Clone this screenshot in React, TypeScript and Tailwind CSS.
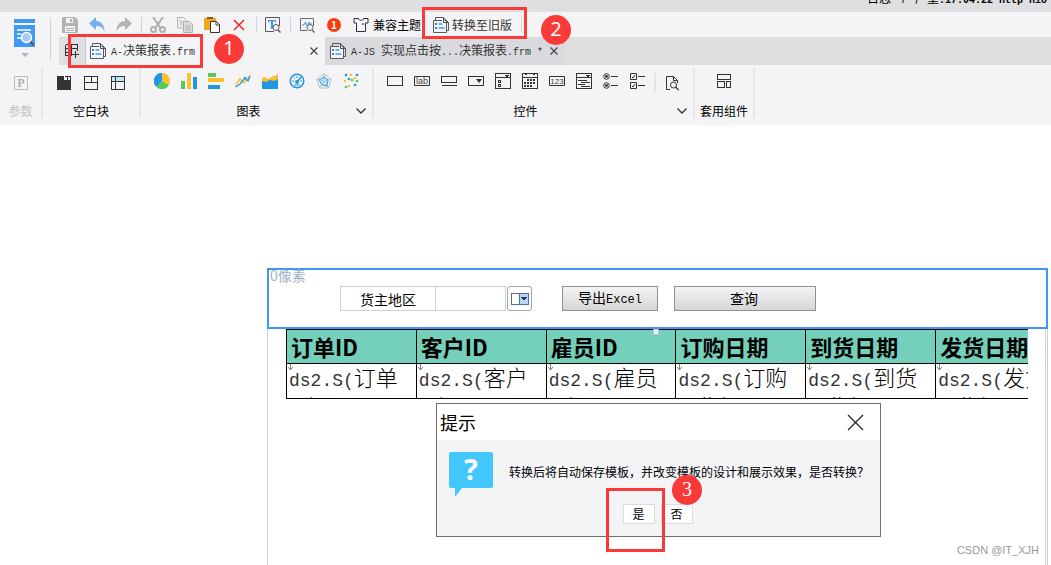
import React from 'react';

const INK = '#333335';

const Svg: React.FC<{ w?: number; h?: number; crisp?: boolean; children: React.ReactNode }> = ({ w = 16, h = 16, crisp, children }) => (
  <svg
    width={w}
    height={h}
    viewBox={`0 0 ${w} ${h}`}
    fill="none"
    shapeRendering={crisp ? 'crispEdges' : 'auto'}
    className="shrink-0"
    aria-hidden="true"
  >
    {children}
  </svg>
);

// Latin letters are set in a half-width mono face beside the CJK glyphs
const Mixed: React.FC<{ text: string; latin?: string }> = ({ text, latin = 'text-[10px]' }) => (
  <span className="whitespace-pre">
    {text.split(/([\x20-\x7e]+)/).map((part, i) =>
      i % 2 === 1 ? <span key={i} className={`font-['Liberation_Mono',monospace] ${latin}`}>{part}</span> : part
    )}
  </span>
);

/* ---------- toolbar icons ---------- */

const LogoIcon = () => (
  <Svg w={22} h={28}>
    <path d="M0 0h21v4H0zM0 6h21v22H0z" fill="#3f98f3" />
    <path d="M3 11h14M3 15h4M3 19h4" stroke="#fff" strokeWidth="1.5" />
    <path d="M15.5 22l4 4" stroke="#6b4a44" strokeWidth="2" />
    <circle cx="12.5" cy="18.5" r="5" fill="#a9cdf2" stroke="#fff" strokeWidth="1.5" />
  </Svg>
);

const SaveIcon = () => (
  <Svg>
    <path d="M1 0h12l3 3v13H0V1z" fill="#b3b3b5" />
    <path d="M4 1h7v5H4zM3 9h10v6H3z" fill="#f4f4f7" />
    <path d="M8 2h2v3H8zM4 11h8v1H4zM4 13h8v1H4z" fill="#b3b3b5" />
  </Svg>
);

const UndoIcon = () => (
  <Svg>
    <path d="M0 6.5L7 0v4c5 0 8.500 3.5 8.500 11C14 11 12 9 7 9v4z" fill="#78b0ee" />
  </Svg>
);

const RedoIcon = () => (
  <Svg>
    <path d="M16 6.5L9 0v4C4 4 .5 7.5.5 15 2 11 4 9 9 9v4z" fill="#b3b3b5" />
  </Svg>
);

const CutIcon = () => (
  <Svg>
    <path d="M3 0l7.5 11M13 0L5.5 11" stroke="#b0b0b2" strokeWidth="2" />
    <circle cx="3.5" cy="12.5" r="2.5" stroke="#b0b0b2" strokeWidth="2" />
    <circle cx="12.5" cy="12.5" r="2.5" stroke="#b0b0b2" strokeWidth="2" />
  </Svg>
);

const CopyIcon = () => (
  <Svg>
    <path d="M.5.5h6l3 3V11h-9z" fill="#f4f4f7" stroke="#b0b0b2" />
    <path d="M2.5 4h3M2.5 6h3M2.5 8h3" stroke="#b0b0b2" />
    <path d="M6.5 4.5h6l3 3v8h-9z" fill="#dcdcde" stroke="#b0b0b2" />
    <path d="M8.5 9h5M8.5 11h5M8.5 13h5" stroke="#b0b0b2" />
  </Svg>
);

const PasteIcon = () => (
  <Svg>
    <path d="M0 1h12v12H0z" fill="#f2a81d" />
    <path d="M3 0h6v2H3z" fill="#8a5a16" />
    <path d="M6.5 4.5h6l3 3v8h-9z" fill="#fff" stroke="#333" />
    <path d="M12 4.5v3.5h3.5" stroke="#333" />
  </Svg>
);

const DeleteIcon = () => (
  <Svg>
    <path d="M3 3l10 10M13 3L3 13" stroke="#ea2626" strokeWidth="1.5" />
  </Svg>
);

const TextSearchIcon = () => (
  <Svg>
    <path d="M9 14.5H.5V.5h14V9" stroke="#59595b" />
    <path d="M3 3h8v2.5h-.8L9.5 4H8v6.500l1 .5v.5H5V11l1-.5V4H4.500l-.7 1.500H3z" fill="#3f8ff0" />
    <circle cx="11" cy="10.5" r="3" fill="#f4f4f7" stroke="#59595b" />
    <path d="M13 13l2.5 2.5" stroke="#59595b" strokeWidth="1.5" />
  </Svg>
);

const ChartSearchIcon = () => (
  <Svg>
    <path d="M8 13.5H1.5v-12h13V9" stroke="#6a6a6c" />
    <path d="M3 8h2l1.5-3 2 5 1.5-5 1 2h2" stroke="#3f8ff0" />
    <circle cx="11" cy="10.5" r="3" fill="#f4f4f7" stroke="#6a6a6c" />
    <path d="M13 13l2.5 2.5" stroke="#6a6a6c" strokeWidth="1.5" />
  </Svg>
);

const ShirtIcon = () => (
  <Svg>
    <path d="M1 1.5h4.5C6 4 10 4 10.5 1.500H15V6h-2.500v8.500h-9V6H1z" stroke={INK} />
    <path d="M9 6h2v2H9z" fill="#3f98f3" />
  </Svg>
);

const TemplateIcon = () => (
  <Svg>
    <path d="M2.5 3V.5h8l5 5v8H14" stroke="#5a5a5c" />
    <path d="M.5 3.5h13v12H.5z" fill="#f4f4f7" stroke="#5a5a5c" />
    <path d="M9 2.5h1.5l3.5 3.5H9z" fill="#f4f4f7" />
    <path d="M10.5 1v4.5h5" stroke="#4a4a4c" />
    <path d="M2 6h2v2H2zM2 10h2v2H2z" fill="#2f86d8" />
    <path d="M5.5 7h4M5.5 11h6" stroke="#3f98f3" strokeWidth="1.5" />
  </Svg>
);

const AddTabIcon = () => (
  <Svg w={14} h={14} crisp>
    <path d="M.5.5h12v6M.5.5v11h6M.5 4.5h12M.5 8.5h6M6.5.5v11M10.5 7v7M7 10.5h7" stroke={INK} />
  </Svg>
);

const CloseIcon = () => (
  <Svg w={10} h={10}>
    <path d="M1.5 1.5l7 7M8.500 1.5l-7 7" stroke="#444" strokeWidth="1.2" />
  </Svg>
);

const ChevronIcon = () => (
  <Svg w={10} h={6}>
    <path d="M.5.5L5 5 9.500.5" stroke={INK} strokeWidth="1.3" />
  </Svg>
);

/* ---------- ribbon icons ---------- */

const blankIcons = [
  <Svg h={18} crisp><path d="M1 3h7v4h7v10H1z" fill={INK} /><path d="M8.5 3.5h6v4M11.5 3.500V7M8 7.5h6" stroke={INK} /></Svg>,
  <Svg h={18} crisp><path d="M1.5 3.5h13v13h-13zM1.5 9.5h13M8.5 3.5v6" stroke={INK} /></Svg>,
  <Svg h={18} crisp><path d="M2 4h12v4H2z" fill="#bfe6f2" /><path d="M1.5 3.5h13v13h-13zM1.5 8.5h13M5.5 3.5v13" stroke={INK} /></Svg>,
];

const chartIcons = [
  <Svg><path d="M8 8V0a8 8 0 017 12z" fill="#fbc02d" /><path d="M8 8l7 4A8 8 0 012.500 14z" fill="#57cb53" /><path d="M8 8l-5.500 6A8 8 0 018 0z" fill="#2196e3" /></Svg>,
  <Svg crisp><path d="M0 8h4v8H0z" fill="#57cb53" /><path d="M6 0h4v16H6z" fill="#fbc02d" /><path d="M12 4h4v12h-4z" fill="#2196e3" /></Svg>,
  <Svg crisp><path d="M0 0h8v4H0z" fill="#57cb53" /><path d="M0 5h16v4H0z" fill="#fbc02d" /><path d="M0 12h12v4H0z" fill="#2196e3" /></Svg>,
  <Svg><path d="M.5 12l4.500-6 4 4 6-7.500" stroke="#fbc02d" strokeWidth="1.5" /><path d="M.5 14l4.500-3 5-6 3 3 2-5" stroke="#2196e3" strokeWidth="1.3" /><circle cx="5" cy="6.5" r="1.3" fill="#fbc02d" /><circle cx="10" cy="5" r="1.3" fill="#2196e3" /></Svg>,
  <Svg><path d="M0 5l3-1 3 2 5-3h2l3-2v10H0z" fill="#fbc02d" /><path d="M0 8l4 1 4-2 4 1 4-2v10H0z" fill="#2196e3" /></Svg>,
  <Svg><circle cx="8" cy="8" r="6.8" stroke="#2196e3" strokeWidth="1.5" /><path d="M3 8h2M8 3v2M11 8h2M4.5 4.5l1 1M5 12h6" stroke="#2196e3" /><path d="M8 9l4-5" stroke="#2196e3" strokeWidth="1.5" /><circle cx="8" cy="9" r="2" fill="#2196e3" /></Svg>,
  <Svg><path d="M8 .8l7.200 5.400-2.700 8.800h-9L.8 6.200zM8 .8V8M15 6L8 8l4.500 7M3.500 15L8 8 1 6" stroke="#b8bcc0" /><path d="M3 7l5-3 4 3-1 6-5-1z" fill="#9fd3f5" fillOpacity=".6" stroke="#2ea3ea" /></Svg>,
  <Svg><g fill="#fbc02d"><circle cx="8" cy="2" r="1.3" /><circle cx="2" cy="8" r="1.3" /><circle cx="12" cy="5" r="1.3" /><circle cx="6" cy="13" r="1.3" /></g><g fill="#2196e3"><circle cx="3" cy="2" r="1.3" /><circle cx="14" cy="2" r="1.3" /><circle cx="6" cy="6" r="1.3" /><circle cx="12" cy="12" r="1.3" /></g><g fill="#57cb53"><circle cx="9" cy="7" r="1.3" /><circle cx="14" cy="8" r="1.3" /><circle cx="3" cy="14" r="1.3" /></g></Svg>,
];

const widgetIcons = [
  <Svg crisp><path d="M.5 3.5h15v9H.5z" stroke={INK} /></Svg>,
  <Svg><path d="M.5 3.5h15v9H.5z" stroke={INK} /><text x="8" y="11" textAnchor="middle" fontSize="9" fontFamily="Liberation Sans" fill="#444">lab</text></Svg>,
  <Svg crisp><path d="M.5 3.5h15v6H.5zM1 12.5h15" stroke={INK} /></Svg>,
  <Svg><path d="M.5 3.5h15v9H.5z" stroke={INK} shapeRendering="crispEdges" /><path d="M8 6h6l-3 4z" fill={INK} /></Svg>,
  <Svg crisp><path d="M.5.5h15v15H.5zM.5 4.5h15M3.5 7.5h2v2h-2zM3.5 11.5h2v2h-2z" stroke={INK} /><path d="M10 2h4v1h-1v1h-2V3h-1z" fill={INK} /></Svg>,
  <Svg crisp><path d="M.5.5h15v15H.5zM.5 4.5h15" stroke={INK} /><path d="M3 1h2v1H3zM11 1h2v1h-2z" fill={INK} /><path d="M5 7h9M2 10h12M2 13h8" stroke={INK} strokeWidth="2" strokeDasharray="2 1" /></Svg>,
  <Svg><path d="M.5 3.5h15v9H.5z" stroke={INK} /><text x="8" y="11" textAnchor="middle" fontSize="8" fontFamily="Liberation Sans" fill="#444">123</text></Svg>,
  <Svg crisp><path d="M.5.5h15v15H.5zM.5 4.5h15M2 7.5h9M5 9.5h9M2 11.5h7M5 13.5h9" stroke={INK} /><path d="M10 2h4v1h-1v1h-2V3h-1z" fill={INK} /></Svg>,
  <Svg><circle cx="3.5" cy="3.5" r="2.8" stroke={INK} /><circle cx="3.5" cy="12.5" r="2.8" stroke={INK} /><circle cx="3.5" cy="3.5" r="1.4" fill={INK} /><circle cx="3.5" cy="12.5" r="1.4" fill={INK} /><path d="M8 3.5h7M8 12.5h7" stroke={INK} /></Svg>,
  <Svg><path d="M.5.5h6v6h-6zM.5 9.5h6v6h-6zM8 3.5h7M8 12.5h7" stroke={INK} /><path d="M2 4l1 1 2-3M2 13l1 1 2-3" stroke={INK} /></Svg>,
];

const PreviewIcon = () => (
  <Svg>
    <path d="M6 14.5H2.5v-13h7l4 4V8M9.500 1.500v4h4" stroke={INK} />
    <circle cx="9.5" cy="10" r="3" stroke={INK} />
    <path d="M11.5 12l3 3" stroke={INK} strokeWidth="1.3" />
  </Svg>
);

const LayoutIcon = () => (
  <Svg crisp>
    <path d="M1.5 1.5h13v5h-13zM1.5 8.5h7v6h-7zM10.5 8.5h4v6h-4z" stroke={INK} />
  </Svg>
);

/* ---------- pieces ---------- */

const ToolButton: React.FC<{ label: string; children: React.ReactNode }> = ({ label, children }) => (
  <button type="button" aria-label={label} className="block">{children}</button>
);

const ToolDivider = () => <div className="w-px h-4 ml-[9px] mr-2 bg-[#d3d3d6]" />;

const GroupDivider = () => <div className="w-0.5 h-[50px] mt-[3px] shrink-0 bg-[#e7e6e1]" />;

const RibbonGroup: React.FC<{ label: string; width: string; more?: boolean; muted?: boolean; children: React.ReactNode }> = ({ label, width, more, muted, children }) => (
  <div className={`${width} shrink-0 flex flex-col pt-2`}>
    <div className="h-[18px] flex items-start justify-center gap-[11px]">{children}</div>
    <div className={`mt-3 flex items-center leading-4 ${muted ? 'text-[#c0c0c3]' : 'text-black'}`}>
      <span className="flex-1 text-center whitespace-nowrap">{label}</span>
      {more && (
        <button type="button" aria-label={`${label}展开`} className="w-4"><ChevronIcon /></button>
      )}
    </div>
  </div>
);

const Header = () => (
  <header className="bg-[#f4f4f7]">
    <div className="h-3 bg-[#dfdfe1] overflow-hidden flex items-end justify-end pb-[5px] leading-3">
      <span className="shrink-0 -mr-2 text-black"><Mixed text="日志 个 严重:17:04:22 http nio 8" latin="text-[10px] font-bold" /></span>
    </div>

    <div className="flex">
      <div className="w-[50px] pt-[7px] flex flex-col items-center shrink-0">
        <ToolButton label="模板"><LogoIcon /></ToolButton>
        <div className="mt-1.5 border-x-4 border-x-transparent border-t-4 border-t-[#b3b3b5]" />
      </div>
      <div className="w-px h-[42px] mt-1.5 bg-[#d3d3d6]" />

      <div className="flex-1 min-w-0">
        <div className="h-[25px] pl-[11px] flex items-center">
          <div className="flex gap-[11px]">
            <ToolButton label="保存"><SaveIcon /></ToolButton>
            <ToolButton label="撤销"><UndoIcon /></ToolButton>
            <ToolButton label="重做"><RedoIcon /></ToolButton>
          </div>
          <ToolDivider />
          <div className="flex gap-[11px]">
            <ToolButton label="剪切"><CutIcon /></ToolButton>
            <ToolButton label="复制"><CopyIcon /></ToolButton>
            <ToolButton label="粘贴"><PasteIcon /></ToolButton>
            <ToolButton label="删除"><DeleteIcon /></ToolButton>
          </div>
          <ToolDivider />
          <ToolButton label="查找"><TextSearchIcon /></ToolButton>
          <ToolDivider />
          <div className="flex items-center gap-[11px]">
            <ToolButton label="性能检测"><ChartSearchIcon /></ToolButton>
            <span className="w-4 flex justify-center">
              <span className="w-3.5 h-3.5 rounded-full bg-[#fd3c0d] text-white text-[10px] leading-[14px] text-center font-bold">1</span>
            </span>
            <button type="button" className="flex items-center gap-1 whitespace-nowrap text-black"><ShirtIcon />兼容主题</button>
          </div>
          <button type="button" className="ml-3 flex items-center gap-[3px] whitespace-nowrap"><TemplateIcon />转换至旧版</button>
          <ToolDivider />
        </div>

        <div className="h-7 ml-2 bg-[#dfdfe1] flex">
          <button type="button" aria-label="新建" className="w-[26px] shrink-0 flex items-center justify-center"><AddTabIcon /></button>
          <div className="w-[240px] shrink-0 pl-1 pr-1.5 flex items-center bg-[#f4f4f7] border-l border-[#c8c8cc]">
            <TemplateIcon />
            <span className="ml-[5px] flex-1"><Mixed text="A-决策报表.frm" /></span>
            <button type="button" aria-label="关闭 A-决策报表.frm"><CloseIcon /></button>
          </div>
          <div className="w-[240px] shrink-0 pl-[5px] pr-1.5 flex items-center bg-[#d9dadd]">
            <TemplateIcon />
            <span className="ml-[5px] flex-1"><Mixed text="A-JS 实现点击按...决策报表.frm *" /></span>
            <button type="button" aria-label="关闭 A-JS"><CloseIcon /></button>
          </div>
        </div>
      </div>
    </div>

    <div className="h-[60px] flex">
      <RibbonGroup label="参数" width="w-[41px]" muted>
        <Svg h={18}>
          <path d="M1.5 3.5h13v13h-13z" stroke="#bcbcbf" />
          <text x="8" y="14" textAnchor="middle" fontSize="12" fontWeight="bold" fontFamily="Liberation Serif" fill="#b0b0b3">P</text>
        </Svg>
      </RibbonGroup>
      <GroupDivider />
      <RibbonGroup label="空白块" width="w-[96px]">
        {blankIcons.map((icon, i) => <ToolButton key={i} label={`空白块 ${i + 1}`}>{icon}</ToolButton>)}
      </RibbonGroup>
      <GroupDivider />
      <RibbonGroup label="图表" width="w-[231px]" more>
        {chartIcons.map((icon, i) => <ToolButton key={i} label={`图表 ${i + 1}`}>{icon}</ToolButton>)}
      </RibbonGroup>
      <GroupDivider />
      <RibbonGroup label="控件" width="w-[319px]" more>
        {widgetIcons.map((icon, i) => <ToolButton key={i} label={`控件 ${i + 1}`}>{icon}</ToolButton>)}
        <div className="flex gap-2 -ml-[3px]">
          <div className="w-0.5 h-5 bg-[#eae5da]" />
          <ToolButton label="预览"><PreviewIcon /></ToolButton>
        </div>
      </RibbonGroup>
      <GroupDivider />
      <RibbonGroup label="套用组件" width="w-[58px]">
        <ToolButton label="套用组件"><LayoutIcon /></ToolButton>
      </RibbonGroup>
      <GroupDivider />
    </div>
  </header>
);

const columns = ['订单ID', '客户ID', '雇员ID', '订购日期', '到货日期', '发货日期'];

const ParameterPane = () => (
  <form className="h-[61px] border-2 border-[#3f98f3] bg-white flex items-start text-sm text-black" onSubmit={e => e.preventDefault()}>
    <span className="w-[71px] pl-px leading-[11px] text-[#9fb2c3] shrink-0">0像素</span>
    <div className="mt-4 flex items-center whitespace-nowrap">
      <label htmlFor="region" className="w-[96px] h-[25px] border border-[#d0d0d0] flex items-center justify-center">货主地区</label>
      <input id="region" type="text" className="w-[70px] h-[25px] border border-l-0 border-[#d0d0d0] px-1" />
      <button type="button" aria-label="展开货主地区" className="ml-px w-[25px] h-[25px] rounded-[3px] border border-[#a5a5a5] flex items-center justify-center">
        <Svg w={18} h={12} crisp>
          <path d="M.5.5h17v11H.5z" fill="#fff" stroke="#4a6fae" />
          <path d="M8.5.5h9v11h-9z" fill="#bcd4ef" stroke="#4a6fae" />
          <path d="M10 4h6v1h-1v1h-1v1h-2V6h-1V5h-1z" fill="#1e3a78" />
        </Svg>
      </button>
      <button type="button" className="ml-[30px] w-[96px] h-[25px] pb-0.5 border border-[#8f8f8f] bg-linear-to-b from-[#f4f4f4] to-[#d6d6d6]">
        <Mixed text="导出Excel" latin="text-xs" />
      </button>
      <button type="button" className="ml-4 w-[142px] h-[25px] pb-0.5 pr-0.5 border border-[#8f8f8f] bg-linear-to-b from-[#f4f4f4] to-[#d6d6d6]">查询</button>
    </div>
  </form>
);

const ReportTable = () => (
  <div className="ml-[18px] mr-[17px] overflow-hidden">
    <table className="w-[780px] table-fixed border-collapse text-[22px] text-black">
      <thead>
        <tr>
          {columns.map(name => (
            <th key={name} className="h-[34px] p-0 pb-0.5 pl-1 border border-black bg-[#74d0bb] text-left font-bold leading-[30px] whitespace-nowrap">{name}</th>
          ))}
        </tr>
      </thead>
      <tbody>
        <tr>
          {columns.map(name => (
            <td key={name} className="relative p-0 border border-black">
              <svg className="absolute left-0 top-0" width="7" height="7" viewBox="0 0 7 7" fill="none" aria-hidden="true">
                <path d="M3.5 0v6M1 3l2.5 3L6 3" stroke="#808080" />
              </svg>
              <div className="h-[34px] pl-0.5 overflow-hidden leading-6 font-light whitespace-nowrap">
                <span className="font-['Liberation_Mono',monospace] text-lg leading-6 text-[#333]">ds2.S(</span>{name.slice(0, 2)}<br />{name.slice(2)})
              </div>
            </td>
          ))}
        </tr>
      </tbody>
    </table>
  </div>
);

const ConfirmDialog = () => (
  <div role="dialog" aria-labelledby="dialog-title" className="absolute left-[436px] top-[403px] w-[445px] border border-[#6f6f6f] bg-[#f4f4f7] text-black">
    <div className="h-9 pl-[3px] pr-4 bg-white flex items-center justify-between">
      <h2 id="dialog-title" className="text-lg leading-6">提示</h2>
      <button type="button" aria-label="关闭">
        <Svg w={17} h={17}><path d="M1 1l15 15M16 1L1 16" stroke="#222" strokeWidth="1.2" /></Svg>
      </button>
    </div>
    <div className="pl-3 pt-3 flex items-start gap-4">
      <Svg w={44} h={45}>
        <path d="M2 0h40a2 2 0 012 2v32a2 2 0 01-2 2H13l-7 9v-9H2a2 2 0 01-2-2V2a2 2 0 012-2z" fill="#42c8fd" />
        <text x="22" y="28" textAnchor="middle" fontSize="29" fontWeight="bold" fontFamily="Open Sans" fill="#fff">?</text>
      </Svg>
      <p className="mt-3 leading-4 whitespace-nowrap">转换后将自动保存模板，并改变模板的设计和展示效果，是否转换？</p>
    </div>
    <div className="mt-[7px] mb-3 pr-0.5 flex justify-center gap-1.5">
      <button type="button" className="w-8 h-5 bg-white border border-[#dcdce0] leading-4">是</button>
      <button type="button" className="w-8 h-5 bg-white border border-[#dcdce0] leading-4">否</button>
    </div>
  </div>
);

const Marker: React.FC<{ n: number; className: string }> = ({ n, className }) => (
  <span className={`absolute w-[30px] h-[30px] rounded-full bg-[#fa3a38] text-white text-xl leading-7 text-center ${className}`}>{n}</span>
);

export default function App() {
  return (
    <div className="relative min-h-screen overflow-hidden flex flex-col bg-white text-xs text-[#333] font-['Noto_Sans_CJK_SC',sans-serif]">
      <Header />

      <main className="flex-1 flex flex-col pt-[143px] pl-[267px] pr-[3px]">
        <ParameterPane />
        <div className="relative flex-1 border-l border-l-[#cfcfcf] border-r-[3px] border-double border-r-[#cfcfcf]">
          <ReportTable />
          <span className="absolute left-1/2 top-0 -ml-1 w-1.5 h-1.5 bg-white border border-[#b5c7dc]" />
        </div>
      </main>

      <ConfirmDialog />

      <div className="absolute left-[68px] top-[34px] w-[135px] h-[34px] border-3 border-[#fa3a38]" />
      <div className="absolute left-[422px] top-[7px] w-[105px] h-8 border-3 border-[#fa3a38]" />
      <div className="absolute left-[606px] top-[488px] w-[59px] h-16 border-3 border-[#fa3a38]" />
      <Marker n={1} className="left-[214px] top-[34px] font-['Open_Sans',sans-serif]" />
      <Marker n={2} className="left-[541px] top-[15px] font-['Open_Sans',sans-serif]" />
      <Marker n={3} className="left-[672px] top-[475px] font-['Liberation_Serif',serif]" />

      <span className="absolute right-3 bottom-[7px] text-[11px] leading-4 text-[#98989a] font-['Liberation_Sans',sans-serif]">CSDN @IT_XJH</span>
    </div>
  );
}
